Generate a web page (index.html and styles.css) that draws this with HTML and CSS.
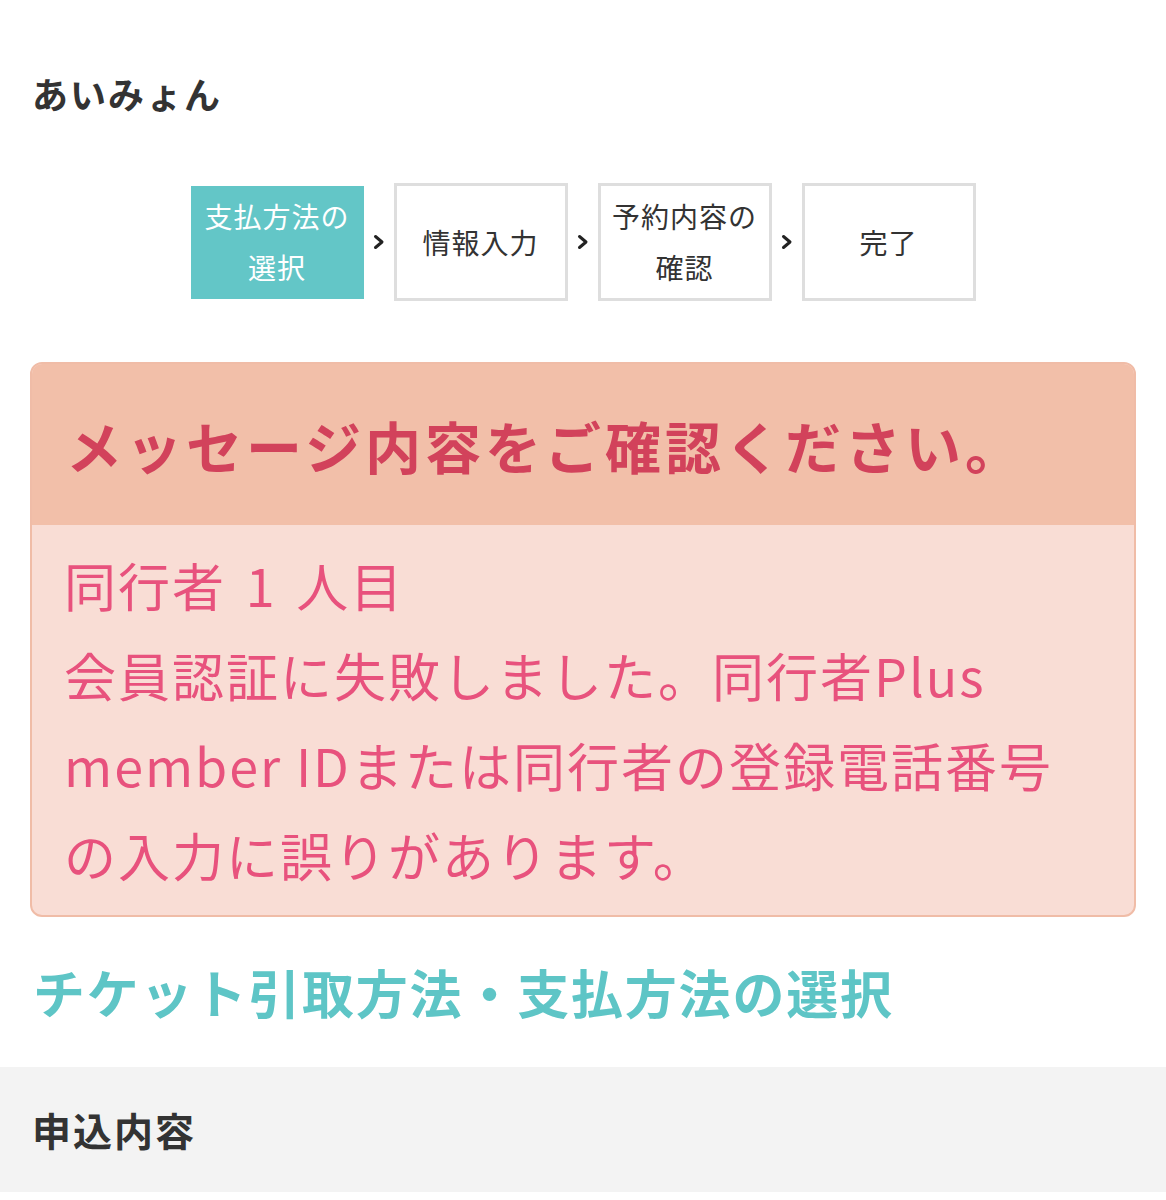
FILE: index.html
```html
<!DOCTYPE html>
<html lang="ja">
<head>
<meta charset="utf-8">
<title>あいみょん</title>
<link rel="stylesheet" href="styles.css">
</head>
<body>
  <h1 class="page-title">あいみょん</h1>

  <ol class="steps">
    <li class="step step-active">支払方法の<br>選択</li>
    <li class="step-arrow" aria-hidden="true"><svg viewBox="0 0 12 16" width="12" height="16"><polyline points="2.5,2.5 9,8 2.5,13.5" fill="none" stroke="#222" stroke-width="3" stroke-linecap="round" stroke-linejoin="round"/></svg></li>
    <li class="step">情報入力</li>
    <li class="step-arrow" aria-hidden="true"><svg viewBox="0 0 12 16" width="12" height="16"><polyline points="2.5,2.5 9,8 2.5,13.5" fill="none" stroke="#222" stroke-width="3" stroke-linecap="round" stroke-linejoin="round"/></svg></li>
    <li class="step">予約内容の<br>確認</li>
    <li class="step-arrow" aria-hidden="true"><svg viewBox="0 0 12 16" width="12" height="16"><polyline points="2.5,2.5 9,8 2.5,13.5" fill="none" stroke="#222" stroke-width="3" stroke-linecap="round" stroke-linejoin="round"/></svg></li>
    <li class="step">完了</li>
  </ol>

  <div class="alert">
    <div class="alert-head">メッセージ内容をご確認ください。</div>
    <div class="alert-body"><span class="companion">同行者 1 人目</span><br>会員認証に失敗しました。同行者Plus<br>member IDまたは同行者の登録電話番号<br>の入力に誤りがあります。</div>
  </div>

  <h2 class="section-title">チケット引取方法・支払方法の選択</h2>

  <div class="band">
    <h3 class="band-title">申込内容</h3>
  </div>
</body>
</html>
```

FILE: styles.css
```css
html, body {
  margin: 0;
  padding: 0;
  background: #ffffff;
}

body {
  font-family: "Noto Sans CJK JP", "Noto Sans", sans-serif;
  color: #333333;
}

.page-title {
  margin: 0;
  padding: 67px 32px 0;
  font-size: 36px;
  letter-spacing: 2px;
  line-height: 52px;
  font-weight: 700;
  color: #333333;
}

.steps {
  list-style: none;
  margin: 64px 0 0;
  padding: 0;
  display: flex;
  justify-content: center;
  align-items: center;
}

.step {
  box-sizing: border-box;
  width: 174px;
  height: 118px;
  border: 3px solid #dedede;
  background: #ffffff;
  display: flex;
  align-items: center;
  justify-content: center;
  text-align: center;
  font-size: 28px;
  letter-spacing: 1px;
  line-height: 51px;
  color: #333333;
}

.step-active {
  width: 173px;
  height: 113px;
  border: none;
  background: #63c6c7;
  color: #ffffff;
}

.step-arrow {
  width: 30px;
  display: flex;
  align-items: center;
  justify-content: center;
}

.step-arrow svg {
  display: block;
}

.alert {
  margin: 61px 30px 0;
  border: 2px solid #f0bca7;
  border-radius: 12px;
  overflow: hidden;
  background: #f9ddd5;
}

.alert-head {
  background: #f2bfa9;
  padding: 41px 34px 40px;
  font-size: 56px;
  letter-spacing: 4px;
  line-height: 80px;
  font-weight: 700;
  color: #d2425b;
}

.alert-body {
  padding: 15px 32px 15px;
  font-size: 52px;
  letter-spacing: 2px;
  line-height: 90px;
  color: #e8527d;
}

.companion {
  word-spacing: 6px;
}

.section-title {
  margin: 37px 0 37px;
  padding: 0 33px;
  font-size: 52px;
  letter-spacing: 1.8px;
  line-height: 76px;
  font-weight: 700;
  color: #5ec5c6;
}

.band {
  background: #f3f3f3;
  padding: 0 32px;
}

.band-title {
  margin: 0;
  font-size: 39px;
  letter-spacing: 2px;
  line-height: 125px;
  font-weight: 700;
  color: #333333;
}
```
